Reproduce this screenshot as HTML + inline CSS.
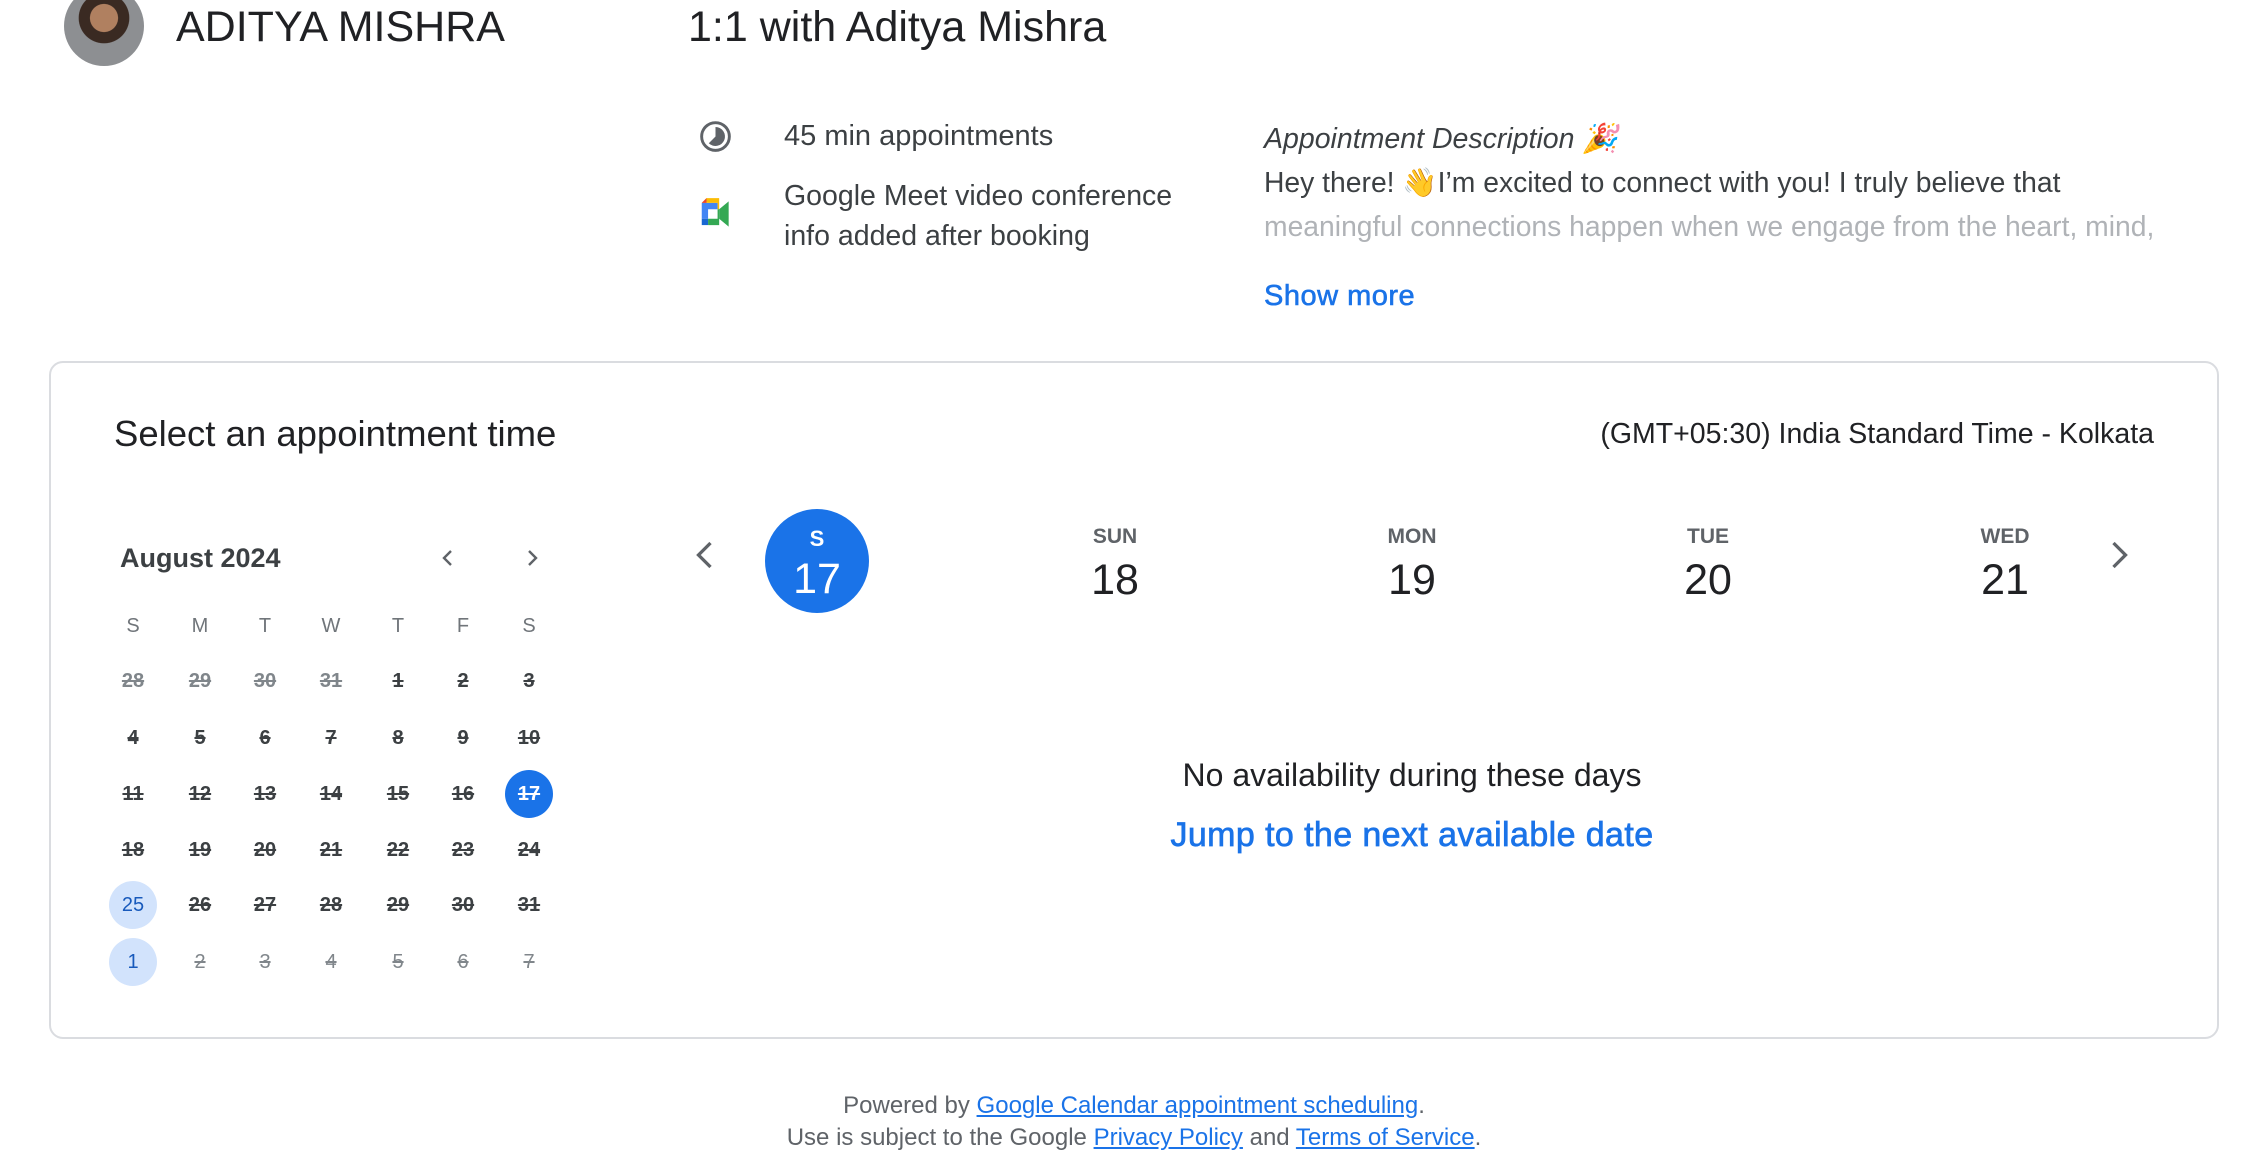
<!DOCTYPE html>
<html><head><meta charset="utf-8"><style>
*{margin:0;padding:0;box-sizing:border-box}
body{width:2268px;height:1152px;background:#fff;position:relative;overflow:hidden;font-family:"Liberation Sans",sans-serif;color:#3c4043}
.a{position:absolute;line-height:1;white-space:nowrap}
.c{transform:translateX(-50%);text-align:center}
.d{position:absolute;width:48px;height:48px;margin-left:-24px;margin-top:-24px;border-radius:50%;display:flex;align-items:center;justify-content:center;font-size:20px;font-weight:bold;text-decoration:line-through;color:#3c4043}
.g{color:#80868b}
a{color:#1a73e8}
</style></head><body>
<div style="position:absolute;left:64px;top:-14px;width:80px;height:80px;border-radius:50%;background:radial-gradient(circle at 50% 40%,#b08060 0 22%,#3a2a22 23% 40%,#8d8f92 41%)"></div>
<div class="a" style="left:176px;top:6px;font-size:43px;color:#202124">ADITYA MISHRA</div>
<div class="a" style="left:688px;top:6px;font-size:43px;color:#202124">1:1 with Aditya Mishra</div>
<svg class="a" style="left:698px;top:119px" width="35" height="35" viewBox="0 0 24 24"><circle cx="12" cy="12" r="9.5" fill="none" stroke="#5f6368" stroke-width="2"/><path d="M12 5.5A6.5 6.5 0 1 1 7.4 16.6L12 12Z" fill="#5f6368"/></svg>
<div class="a" style="left:784px;top:122px;font-size:29px">45 min appointments</div>
<svg class="a" style="left:697px;top:198px" width="38" height="32" viewBox="0 0 24 20"><path d="M3 3h10v4H7v6H3z" fill="#4285f4"/><path d="M3 3l3-3h8v7h-1V3z" fill="#fbbc04"/><path d="M3 3L6 0v3z" fill="#ea4335"/><path d="M3 13h4v4H3z" fill="#1967d2"/><path d="M7 13h6V7h1v10H7z" fill="#34a853"/><path d="M14 7l6-5v16l-6-5z" fill="#34a853"/></svg>
<div class="a" style="left:784px;top:176px;font-size:28.5px;line-height:40px">Google Meet video conference<br>info added after booking</div>
<div class="a" style="left:1264px;top:125px;font-size:28.5px;font-style:italic">Appointment Description 🎉</div>
<div class="a" style="left:1264px;top:168px;font-size:28.3px">Hey there! 👋I’m excited to connect with you! I truly believe that</div>
<div class="a" style="left:1264px;top:212px;font-size:28.3px;color:#b0b3b7">meaningful connections happen when we engage from the heart, mind,</div>
<div class="a" style="left:1264px;top:282px;font-size:29px;color:#1a73e8;letter-spacing:.5px;-webkit-text-stroke:.6px #1a73e8">Show more</div>

<div style="position:absolute;left:49px;top:361px;width:2170px;height:678px;border:2px solid #dadce0;border-radius:14px"></div>
<div class="a" style="left:114px;top:416px;font-size:36.5px;color:#202124">Select an appointment time</div>
<div class="a" style="right:114px;top:420px;font-size:28.5px;color:#202124">(GMT+05:30) India Standard Time - Kolkata</div>
<div class="a" style="left:120px;top:545px;font-size:27px;font-weight:bold;color:#3c4043">August 2024</div>
<svg class="a" style="left:436px;top:546px" width="24" height="24" viewBox="0 0 24 24"><path d="M15 5l-7 7 7 7" fill="none" stroke="#5f6368" stroke-width="2.4"/></svg>
<svg class="a" style="left:520px;top:546px" width="24" height="24" viewBox="0 0 24 24"><path d="M9 5l7 7-7 7" fill="none" stroke="#5f6368" stroke-width="2.4"/></svg>
<div id="cal"></div>

<svg class="a" style="left:688px;top:537px" width="36" height="36" viewBox="0 0 24 24"><path d="M15 4l-8 8 8 8" fill="none" stroke="#5f6368" stroke-width="2.2"/></svg>
<svg class="a" style="left:2100px;top:537px" width="36" height="36" viewBox="0 0 24 24"><path d="M9 4l8 8-8 8" fill="none" stroke="#5f6368" stroke-width="2.2"/></svg>
<div style="position:absolute;left:765px;top:509px;width:104px;height:104px;border-radius:50%;background:#1a73e8"></div>
<div class="a c" style="left:817px;top:528px;font-size:22px;color:#fff;font-weight:bold">S</div>
<div class="a c" style="left:817px;top:558px;font-size:43px;color:#fff">17</div>
<div class="a c" style="left:1115px;top:526px;font-size:21px;font-weight:bold;color:#5f6368">SUN</div>
<div class="a c" style="left:1115px;top:559px;font-size:43px;color:#202124">18</div>
<div class="a c" style="left:1412px;top:526px;font-size:21px;font-weight:bold;color:#5f6368">MON</div>
<div class="a c" style="left:1412px;top:559px;font-size:43px;color:#202124">19</div>
<div class="a c" style="left:1708px;top:526px;font-size:21px;font-weight:bold;color:#5f6368">TUE</div>
<div class="a c" style="left:1708px;top:559px;font-size:43px;color:#202124">20</div>
<div class="a c" style="left:2005px;top:526px;font-size:21px;font-weight:bold;color:#5f6368">WED</div>
<div class="a c" style="left:2005px;top:559px;font-size:43px;color:#202124">21</div>
<div class="a c" style="left:1412px;top:759px;font-size:32px;color:#202124">No availability during these days</div>
<div class="a c" style="left:1412px;top:818px;font-size:34px;color:#1a73e8;letter-spacing:.4px;-webkit-text-stroke:.7px #1a73e8">Jump to the next available date</div>
<div class="a c" style="left:1134px;top:1090px;font-size:24px;color:#5f6368;line-height:32px">Powered by <a href="#">Google Calendar appointment scheduling</a>.<br>Use is subject to the Google <a href="#">Privacy Policy</a> and <a href="#">Terms of Service</a>.</div>
<script>
var xs=[133,200,265,331,398,463,529],ys=[681,738,794,850,905,962],h='';
'SMTWTFS'.split('').forEach(function(l,i){h+='<div class="a c" style="left:'+xs[i]+'px;top:616px;font-size:20px;color:#70757a">'+l+'</div>'});
var days=[28,29,30,31];for(var i=1;i<=31;i++)days.push(i);for(i=1;i<=7;i++)days.push(i);
days.forEach(function(d,k){var r=Math.floor(k/7),c=k%7,st='',cl='d';
if(k<4||k>=35)cl+=' g';
if(k===20)st='background:#1a73e8;color:#fff;';
if(k===28||k===35){st='background:#d2e3fc;color:#185abc;text-decoration:none;font-weight:normal;';}
if(k>35)st='font-weight:normal;';
h+='<div class="'+cl+'" style="left:'+xs[c]+'px;top:'+ys[r]+'px;'+st+'">'+d+'</div>'});
document.getElementById('cal').innerHTML=h;
</script>
</body></html>
